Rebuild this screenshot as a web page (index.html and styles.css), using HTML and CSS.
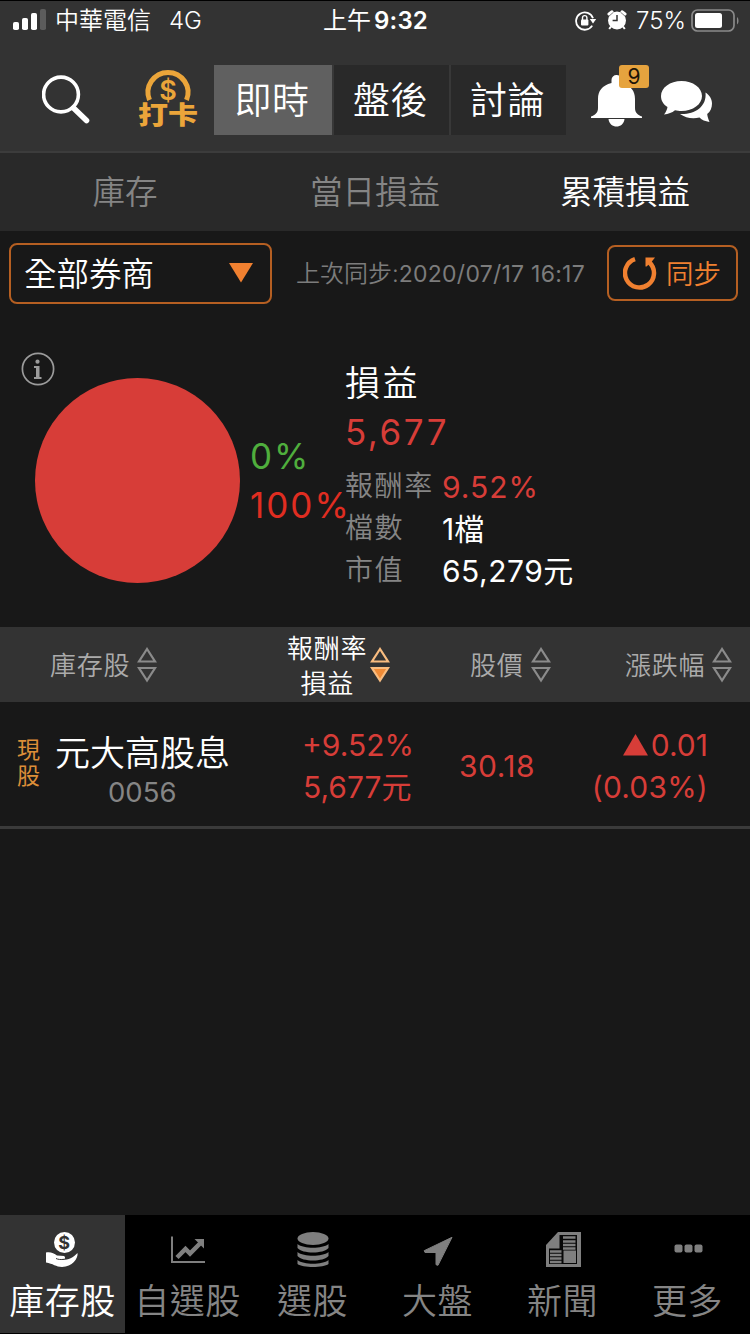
FILE: index.html
```html
<!DOCTYPE html>
<html lang="zh-Hant">
<head>
<meta charset="utf-8">
<title>庫存股</title>
<link rel="stylesheet" href="styles.css">
</head>
<body>
<div class="app">
  <header class="top">
    <div class="status">
      <svg class="signal" width="34" height="22" viewBox="0 0 34 22"><g fill="#fff"><rect x="0" y="13" width="6" height="8" rx="1.8"/><rect x="9" y="9" width="6" height="12" rx="1.8"/><rect x="18" y="4" width="6" height="17" rx="1.8"/></g><rect x="27" y="0" width="6" height="21" rx="1.8" fill="#5c5c5c"/></svg>
      <span class="carrier">中華電信</span>
      <span class="network">4G</span>
      <span class="clock">上午<b>9:32</b></span>
      <svg class="lock" width="22" height="20" viewBox="0 0 22 20"><path d="M17.2 14.6A8.7 8.7 0 1 1 18 7.2" fill="none" stroke="#fff" stroke-width="1.8"/><path d="M14.8 8h6.4L18 12.4z" fill="#fff"/><rect x="6" y="8.6" width="7.4" height="6" rx="1" fill="#fff"/><path d="M7.5 9V6.8a2.2 2.2 0 0 1 4.4 0V9" fill="none" stroke="#fff" stroke-width="1.4"/></svg>
      <svg class="alarm" width="20" height="20" viewBox="0 0 20 20"><circle cx="10" cy="10.500" r="9" fill="#fff"/><path d="M2 4 5 1.800M18 4 15 1.800" stroke="#fff" stroke-width="3" stroke-linecap="round"/><path d="M4 16.500 2.200 19M16 16.500 17.800 19" stroke="#fff" stroke-width="2"/><path d="M2.600 5.600 6 2.600M17.400 5.600 14 2.600" stroke="#333" stroke-width=".6"/><path d="M10 5v5.600H5.600" fill="none" stroke="#333" stroke-width="1.500"/></svg>
      <span class="percent">75%</span>
      <svg class="battery" width="48" height="24" viewBox="0 0 48 24"><rect x="1" y="1" width="42" height="21" rx="5.500" fill="none" stroke="#8a8a8a" stroke-width="1.700"/><rect x="4" y="4" width="27" height="15" rx="2.500" fill="#fff"/><path d="M46 8c2 1.500 2 6 0 7.500z" fill="#8a8a8a"/></svg>
    </div>
    <div class="toolbar">
      <svg class="search" width="48" height="50" viewBox="0 0 48 50"><circle cx="19" cy="19.500" r="17.400" fill="none" stroke="#fff" stroke-width="3.600"/><path d="M31.500 33 44.500 45.500" stroke="#fff" stroke-width="5.600" stroke-linecap="round"/></svg>
      <svg class="punch" width="60" height="60" viewBox="0 0 60 60"><path d="M11.500 32A20 20 0 1 1 48.500 32" fill="none" stroke="#eba53a" stroke-width="5"/><text class="coin" x="30" y="31.500" text-anchor="middle">$</text><text class="stamp" x="0" y="65.500" transform="scale(1 .85)">打卡</text></svg>
      <nav class="segments"><span class="segment on">即時</span><span class="segment">盤後</span><span class="segment">討論</span></nav>
      <div class="alerts">
        <svg width="52" height="54" viewBox="0 0 52 54"><path d="M20.500 9V6a5 5 0 0 1 10 0v3C40 11.500 44 17 44 25v9c0 5 3 7 7 8.500V44H0v-1.500c4-1.500 7-3.500 7-8.500v-9c0-8 4-13.500 13.500-16z" fill="#fff"/><path d="M17.500 45h16c-1 10-15 10-16 0z" fill="#fff"/></svg>
        <span class="badge">9</span>
      </div>
      <svg class="chat" width="52" height="43" viewBox="0 0 52 43"><path d="M20.500 0C9 0 0 6.700 0 15c0 4.800 2.500 8.500 6.500 11-.5 2.800-1.500 5-3.500 7.500 4.500-.5 8-1.700 11-4.200 2 .5 4 .7 6.500.7C32 30 41 23.300 41 15S32 0 20.500 0z" fill="#fff"/><path d="M44.500 11.500c4 2.500 6.500 6.500 6.500 11 0 4.200-1.500 8-4.800 10.500.3 2.500 1 5 2.300 8-4.500-.8-7.500-2-10-4.500-7 1.500-14 .5-19.500-3.500 13.500.8 27-6.500 25.500-21.500z" fill="#fff"/></svg>
    </div>
  </header>

  <nav class="subnav"><span>庫存</span><span>當日損益</span><span class="on">累積損益</span></nav>

  <section class="filter">
    <div class="broker"><span>全部券商</span><svg width="24" height="20" viewBox="0 0 24 20"><path d="M0 0h24L12 19.500z" fill="#f08030"/></svg></div>
    <div class="synced">上次同步:<span>2020/07/17 16:17</span></div>
    <div class="sync"><svg width="34" height="34" viewBox="0 0 34 34"><path d="M12 3.200A14.500 14.500 0 1 0 26.500 6.500" fill="none" stroke="#f08030" stroke-width="4.500"/><path d="M22.500 1.500H32L28.500 6l-5 4.500h-1z" fill="#f08030"/></svg><span>同步</span></div>
  </section>

  <section class="summary">
    <svg class="info" width="34" height="34" viewBox="0 0 34 34"><circle cx="17" cy="17" r="15.600" fill="none" stroke="#9b9b9b" stroke-width="1.700"/><circle cx="16.500" cy="9.700" r="2.100" fill="#9b9b9b"/><path d="M13 14h5.500v11h2v2H13v-2h2v-9h-2z" fill="#9b9b9b"/></svg>
    <div class="pie"></div>
    <div class="ratio"><span class="loss">0%</span><span class="gain">100%</span></div>
    <div class="totals">
      <div class="title">損益</div>
      <div class="amount">5,677</div>
      <dl><dt>報酬率</dt><dd class="red">9.52%</dd><dt>檔數</dt><dd class="count">1檔</dd><dt>市值</dt><dd>65,279元</dd></dl>
    </div>
  </section>

  <section class="head">
    <div class="col-a"><span>庫存股</span><svg width="20" height="36" viewBox="0 0 20 36"><path d="M10 2 2 14.500h16zM10 33.500 2 21h16z" class="tri"/></svg></div>
    <div class="col-b"><span>報酬率<br>損益</span><svg width="20" height="36" viewBox="0 0 20 36"><path d="M10 2 2 14.500h16z" class="tri lit"/><path d="M10 33.500 2 21h16z" class="tri lit full"/></svg></div>
    <div class="col-c"><span>股價</span><svg width="20" height="36" viewBox="0 0 20 36"><path d="M10 2 2 14.500h16zM10 33.500 2 21h16z" class="tri"/></svg></div>
    <div class="col-d"><span>漲跌幅</span><svg width="20" height="36" viewBox="0 0 20 36"><path d="M10 2 2 14.500h16zM10 33.500 2 21h16z" class="tri"/></svg></div>
  </section>

  <section class="row">
    <div class="kind">現股</div>
    <div class="stock"><div class="name">元大高股息</div><div class="code">0056</div></div>
    <div class="profit"><div>+9.52%</div><div class="sum">5,677元</div></div>
    <div class="price">30.18</div>
    <div class="change"><div><svg width="25" height="22" viewBox="0 0 25 22"><path d="M0 21.500h25L12.500 0z" fill="#d73d38"/></svg>0.01</div><div class="pct">(0.03%)</div></div>
  </section>

  <main class="blank"></main>

  <nav class="tabs">
    <div class="tab on"><svg width="36" height="36" viewBox="0 0 36 36"><circle cx="19.500" cy="10.500" r="10.500" fill="#fff"/><text x="19.500" y="17" text-anchor="middle" class="dollar">$</text><path d="M1 20.500c4-1 8 .5 11 3l7 .5c1.500.5 1.500 3-.5 3.500h-4c6 1.500 13-1 18-6.500 1 5-5.500 14-15.500 14-6 0-9-3.500-16-4.500z" fill="#fff"/><path d="M11 26.500c2 1 5 1.300 8 .8" fill="none" stroke="#333" stroke-width="1"/></svg><span>庫存股</span></div>
    <div class="tab"><svg width="36" height="36" viewBox="0 0 36 36"><path d="M2 4.500V30h33" fill="none" stroke="#7f7f7f" stroke-width="2"/><path d="M7 25.500 15.500 17l4.500 4.500 10-10" fill="none" stroke="#7f7f7f" stroke-width="4.500"/><path d="M24.500 7H34v9.500z" fill="#7f7f7f"/></svg><span>自選股</span></div>
    <div class="tab"><svg width="36" height="36" viewBox="0 0 36 36"><g fill="#7f7f7f"><ellipse cx="18" cy="6.500" rx="15.500" ry="6.500"/><path d="M2.500 12c6 5 25 5 31 0v4c-5 6-26 6-31 0zM2.500 20c6 5 25 5 31 0v4c-5 6-26 6-31 0zM2.500 28c6 5 25 5 31 0v4c-5 4-26 4-31 0z"/></g></svg><span>選股</span></div>
    <div class="tab"><svg width="36" height="36" viewBox="0 0 36 36"><path d="M4.200 18.700 32 5.300l-14 28-2-.6V20.500H5z" fill="#7f7f7f" stroke="#7f7f7f" stroke-linejoin="round"/></svg><span>大盤</span></div>
    <div class="tab"><svg width="36" height="36" viewBox="0 0 36 36"><path d="M13 0h23v35H1V13z" fill="#7f7f7f"/><path d="M14.500 3h17.500v29H4V16.500h10.500z" fill="#080808"/><path d="M18 5.500h12.500M18 9.500h12.500M18 13h12.500M18 16.500h12.500M5 19.500h11.500M5 23h11.500M5 26.500h11.500M5 30h11.500" stroke="#7f7f7f" stroke-width="2.400"/><path d="M18.500 18.500H31V31H18.500z" fill="#7f7f7f"/></svg><span>新聞</span></div>
    <div class="tab"><svg width="36" height="36" viewBox="0 0 36 36"><g fill="#7f7f7f"><rect x="4.500" y="12.500" width="8" height="8" rx="2"/><rect x="14.500" y="12.500" width="8" height="8" rx="2"/><rect x="24.500" y="12.500" width="8" height="8" rx="2"/></g></svg><span>更多</span></div>
  </nav>
</div>
</body>
</html>
```
FILE: styles.css
```css
* { box-sizing: border-box; }
body { margin: 0; background: #000; }
svg { display: block; flex: none; }
.app {
  width: 750px;
  height: 1334px;
  display: flex;
  flex-direction: column;
  overflow: hidden;
  background: #181818;
  color: #fff;
  font-family: Inter, "Noto Sans CJK TC", sans-serif;
  font-weight: 350;
  white-space: nowrap;
}

.top { height: 153px; flex: none; background: #333; border-top: 1px solid #000; border-bottom: 2px solid #3c3c3c; }
.status { height: 40px; display: flex; align-items: center; padding-left: 13px; font-size: 24px; line-height: 40px; }
.signal { margin-top: -2px; }
.carrier { width: 115px; padding-left: 8px; }
.network { width: 161px; padding-left: 7px; }
.clock { width: 252px; font-weight: 400; }
.clock b { margin-left: 3px; font-weight: 600; letter-spacing: .2px; }
.alarm { margin-left: 10px; margin-top: -3px; }
.percent { width: 56px; padding-left: 9px; }
.battery { margin-left: 8px; }

.toolbar { display: flex; height: 70px; margin-top: 24px; }
.search { margin: 10px 0 0 42px; }
.punch { margin: 3px 0 0 48px; overflow: visible; }
.coin { font: 600 27px Inter, sans-serif; fill: #eba53a; }
.stamp { font: 900 30px "Noto Sans CJK TC", sans-serif; fill: #eba53a; stroke: #333; stroke-width: 2px; paint-order: stroke; }
.segments { display: flex; gap: 2px; width: 352px; margin-left: 16px; background: #383838; }
.segment { flex: 1; background: #292929; font-size: 37px; line-height: 72px; letter-spacing: .5px; text-align: center; padding-right: 2px; }
.segment.on { flex: 0 0 118px; background: #606060; }
.alerts { position: relative; margin: 9px 0 0 25px; }
.badge { position: absolute; left: 28px; top: -9px; width: 30px; height: 23px; border-radius: 3px; background: #e6a33e; color: #1d1508; font-size: 21px; font-weight: 400; line-height: 23px; text-align: center; }
.chat { margin: 16px 0 0 18px; }

.subnav { display: flex; height: 78px; flex: none; background: #292929; color: #858585; font-size: 32.5px; line-height: 80px; }
.subnav span { flex: 1; text-align: center; }
.subnav .on { color: #fff; }

.filter { display: flex; align-items: center; height: 84px; padding-left: 9px; flex: none; }
.broker { width: 263px; height: 61px; border: 2px solid #b55f22; border-radius: 8px; display: flex; align-items: center; justify-content: space-between; padding: 0 17px 0 13px; font-size: 32.5px; }
.broker span, .sync span { padding-bottom: 3px; }
.synced { width: 335px; padding: 0 0 3px 24px; color: #7c7c7c; font-size: 24px; }
.synced span { font-size: 23px; letter-spacing: .25px; font-weight: 400; }
.sync { width: 131px; height: 56px; border: 2px solid #b55f22; border-radius: 8px; display: flex; align-items: center; padding-left: 14px; gap: 9px; color: #f08030; font-size: 27.5px; }

.summary { display: flex; height: 312px; flex: none; }
.info { margin: 37px -21px 0 21px; }
.pie { width: 205px; height: 205px; margin: 63px 0 0 1px; border-radius: 50%; background: #d73d38; flex: none; }
.ratio { display: flex; flex-direction: column; width: 105px; padding: 117px 0 0 10px; font-size: 35px; line-height: 49px; letter-spacing: 2px; }
.loss { color: #4fae3d; }
.gain { color: #e02d21; }
.totals { padding-top: 43px; }
.title { font-size: 35px; letter-spacing: 2.500px; line-height: 50px; }
.amount { color: #d73d38; font-size: 35px; letter-spacing: 2.500px; line-height: 48px; }
.totals dl { display: grid; grid-template-columns: 97px auto; margin: 9px 0 0; line-height: 42px; }
.totals dt { color: #858585; font-size: 28px; letter-spacing: 1.600px; }
.totals dd { margin: 0; font-size: 30px; letter-spacing: .5px; font-weight: 380; padding-top: 1px; margin-bottom: -1px; }
.totals .red { color: #d73d38; letter-spacing: 1px; }
.totals .count { letter-spacing: 0; }
.ratio, .amount { font-weight: 380; }

.head { display: flex; height: 75px; flex: none; background: #333; color: #ababab; font-size: 26px; letter-spacing: .8px; line-height: 35px; }
.head div { display: flex; align-items: center; }
.head span { padding-top: 2px; }
.head svg { margin-left: 7px; }
.col-a { width: 287px; padding-left: 50px; }
.col-b { width: 183px; color: #fff; text-align: center; }
.head .col-b svg { margin-left: 3px; }
.col-c { width: 155px; }
.tri { fill: none; stroke: #8b8b8b; stroke-width: 2.200px; }
.tri.lit { stroke: #f9bd80; }
.tri.full { fill: #f08b36; }

.row { display: flex; height: 127px; flex: none; border-bottom: 3px solid #3a3a3a; color: #d73d38; font-size: 30px; line-height: 42px; font-weight: 380; }
.kind { width: 55px; padding: 35px 15px 0 17px; color: #dc8e38; font-size: 23px; line-height: 26px; white-space: normal; }
.stock { width: 247px; padding-top: 30px; }
.name { color: #fff; font-size: 35px; font-weight: 350; }
.code { padding-left: 53px; margin-top: -3px; color: #858585; font-size: 27.5px; }
.profit { width: 157px; padding-top: 22px; }
.sum { padding-left: 1px; }
.price { width: 136px; padding-top: 43px; letter-spacing: .5px; }
.change { width: 113px; padding-top: 22px; text-align: right; }
.change div { display: flex; justify-content: flex-end; align-items: center; }
.change svg { margin-right: 3px; }
.pct { letter-spacing: .2px; }

.blank { flex: 1; }
.tabs { display: flex; height: 119px; flex: none; background: #000; border-bottom: 1px solid #000; color: #858585; font-size: 35px; letter-spacing: .5px; }
.tab { width: 125px; padding-top: 17px; display: flex; flex-direction: column; align-items: center; line-height: 66px; }
.tab.on { background: #333; color: #fff; }
.dollar { font: 700 18px Inter, sans-serif; fill: #333; }
```
